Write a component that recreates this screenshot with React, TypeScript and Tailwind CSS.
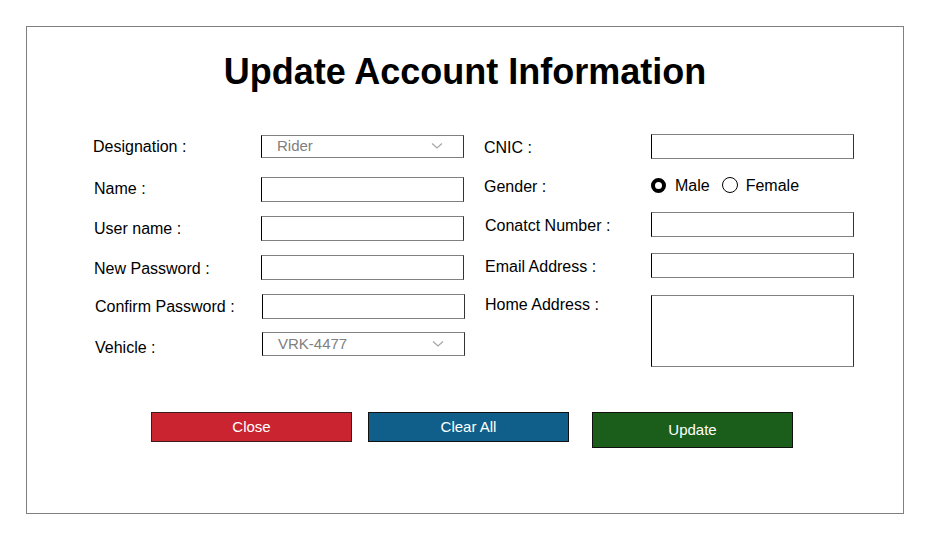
import React from "react";

const font = { fontFamily: '"Liberation Sans", Arial, sans-serif' };

function Chevron() {
  return (
    <svg width="12" height="7" viewBox="0 0 12 7" className="absolute right-[20px] top-1/2 -translate-y-1/2">
      <path d="M1 1 L6 5.5 L11 1" fill="none" stroke="#a6a6a6" strokeWidth="1.2" />
    </svg>
  );
}

function Input({ h = "h-[25px]", extra = "" }: { h?: string; extra?: string }) {
  return (
    <div className={`w-[203px] ${h} border border-[#808080] border-l-black border-r-[#333] bg-white ${extra}`} />
  );
}

function Select({ value, h }: { value: string; h: string }) {
  return (
    <div className={`relative w-[203px] ${h} border border-[#808080] border-l-black border-r-[#333] bg-white flex items-center pl-[15px] text-[15px] text-[#808080]`}>
      {value}
      <Chevron />
    </div>
  );
}

export default function App() {
  return (
    <div className="w-[930px] h-[540px] bg-white" style={font}>
      <div className="absolute left-[26px] top-[26px] w-[878px] h-[488px] border border-[#7f7f7f] flex flex-col">
        <h1 className="mt-[24px] text-center text-[36px] leading-[42px] font-bold text-black">
          Update Account Information
        </h1>
        <div className="flex items-start pl-[66px] mt-[40px] text-[16px] text-black">
          {/* left column */}
          <div className="flex flex-col mt-[1px] w-[391px]">
            <div className="flex items-center">
              <span className="w-[168px] translate-y-[1px]">Designation :</span>
              <Select value="Rider" h="h-[23px]" />
            </div>
            <div className="flex items-center mt-[19px]">
              <span className="w-[168px] pl-[1px] -translate-y-[1px]">Name :</span>
              <Input />
            </div>
            <div className="flex items-center mt-[14px]">
              <span className="w-[168px] pl-[1px]">User name :</span>
              <Input />
            </div>
            <div className="flex items-center mt-[14px]">
              <span className="w-[168px] pl-[1px] translate-y-[1px]">New Password :</span>
              <Input />
            </div>
            <div className="flex items-center mt-[14px]">
              <span className="w-[169px] pl-[2px]">Confirm Password :</span>
              <Input />
            </div>
            <div className="flex items-center mt-[13px]">
              <span className="w-[169px] pl-[2px] translate-y-[4px]">Vehicle :</span>
              <Select value="VRK-4477" h="h-[24px]" />
            </div>
          </div>
          {/* right column */}
          <div className="flex flex-col mt-[1px]">
            <div className="flex items-center">
              <span className="w-[167px] translate-y-[1px]">CNIC :</span>
              <Input />
            </div>
            <div className="flex items-center mt-[14px] h-[24px]">
              <span className="w-[167px] translate-y-[2px]">Gender :</span>
              <div className="flex items-center">
                <span className="w-[15px] h-[15px] rounded-full border-[4px] border-black bg-white" />
                <span className="ml-[9px] translate-y-[1px]">Male</span>
                <span className="ml-[12px] w-[16px] h-[16px] rounded-full border-[1.5px] border-black bg-white" />
                <span className="ml-[8px] translate-y-[1px]">Female</span>
              </div>
            </div>
            <div className="flex items-center mt-[15px]">
              <span className="w-[167px] pl-[1px] translate-y-[1px]">Conatct Number :</span>
              <Input />
            </div>
            <div className="flex items-center mt-[16px]">
              <span className="w-[167px] pl-[1px] translate-y-[1px]">Email Address :</span>
              <Input />
            </div>
            <div className="flex items-start mt-[17px]">
              <span className="w-[167px] pl-[1px] -translate-y-[2px]">Home Address :</span>
              <Input h="h-[72px]" />
            </div>
          </div>
        </div>
        <div className="flex items-start pl-[124px] mt-[45px] text-[15px] text-white">
          <button className="w-[201px] h-[30px] bg-[#cb2431] border border-[#3a1c1c] flex items-center justify-center">
            Close
          </button>
          <button className="ml-[16px] w-[201px] h-[30px] bg-[#0f5f8a] border border-[#111] flex items-center justify-center">
            Clear All
          </button>
          <button className="ml-[23px] w-[201px] h-[36px] bg-[#1b5e1b] border border-[#111] flex items-center justify-center pt-[1px]">
            Update
          </button>
        </div>
      </div>
    </div>
  );
}
